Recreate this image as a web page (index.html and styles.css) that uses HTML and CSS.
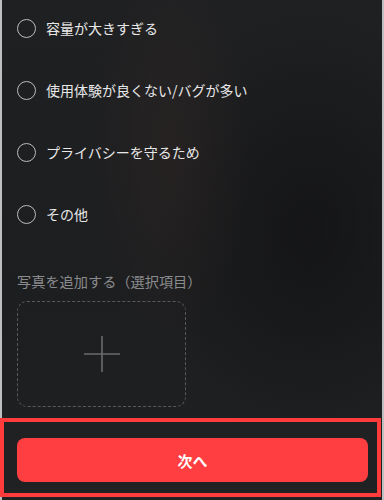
FILE: index.html
```html
<!DOCTYPE html>
<html lang="ja">
<head>
<meta charset="utf-8">
<link rel="stylesheet" href="styles.css">
</head>
<body>
<div class="screen">
  <ul class="options">
    <li class="option"><span class="radio"></span><span class="option-text">容量が大きすぎる</span></li>
    <li class="option"><span class="radio"></span><span class="option-text">使用体験が良くない/バグが多い</span></li>
    <li class="option"><span class="radio"></span><span class="option-text">プライバシーを守るため</span></li>
    <li class="option"><span class="radio"></span><span class="option-text">その他</span></li>
  </ul>
  <div class="photo-label">写真を追加する（選択項目）</div>
  <div class="photo-box">
    <svg class="plus" width="38" height="38" viewBox="0 0 38 38"><path d="M19 1V37M1 19H37" stroke="#6a6b6d" stroke-width="1.6" fill="none"/></svg>
  </div>
  <div class="footer">
    <button class="next-btn">次へ</button>
  </div>
</div>
</body>
</html>
```
FILE: styles.css
```css
* { box-sizing: border-box; }
html, body { margin: 0; padding: 0; }
body {
  width: 384px;
  height: 500px;
  overflow: hidden;
  font-family: "Noto Sans CJK JP", "Noto Sans", sans-serif;
  background: #1d1e20;
}
.screen {
  width: 384px;
  height: 500px;
  display: flex;
  flex-direction: column;
  background:
    radial-gradient(ellipse 80px 200px at 170px 150px, rgba(58,42,38,0.3), transparent),
    radial-gradient(ellipse 160px 220px at 310px 230px, rgba(12,12,13,0.5), transparent),
    linear-gradient(180deg, #1f2022 0%, #1d1e20 60%, #1f2123 100%);
  box-shadow: inset 2px 0 #bfbfbf, inset -2px 0 #bfbfbf;
}
.options {
  list-style: none;
  margin: -3px 0 0 0;
  padding: 0;
}
.option {
  height: 62px;
  display: flex;
  align-items: center;
  padding-left: 17px;
}
.radio {
  width: 19px;
  height: 19px;
  border: 1.5px solid #bcbcbc;
  border-radius: 50%;
  flex: none;
}
.option-text {
  margin-left: 10px;
  font-size: 14px;
  color: #e8e8e8;
  line-height: 20px;
}
.photo-label {
  margin-top: 26px;
  padding-left: 17px;
  font-size: 14.2px;
  line-height: 20px;
  color: #8a8b8d;
}
.photo-box {
  margin: 10px 0 0 17px;
  width: 169px;
  height: 106px;
  border: 1px dashed #58595b;
  border-radius: 10px;
  display: flex;
  align-items: center;
  justify-content: center;
}
.footer {
  margin-top: 11px;
  width: 381px;
  height: 79px;
  border: 4px solid #ff3b3b;
  background: #1f2123;
  padding: 16px 9px 0 13px;
}
.next-btn {
  width: 100%;
  height: 44px;
  border: none;
  border-radius: 8px;
  background: #ff3e41;
  color: #fff;
  font-family: "Noto Sans CJK JP", sans-serif;
  font-size: 15px;
  font-weight: 700;
  padding: 0;
}
```
